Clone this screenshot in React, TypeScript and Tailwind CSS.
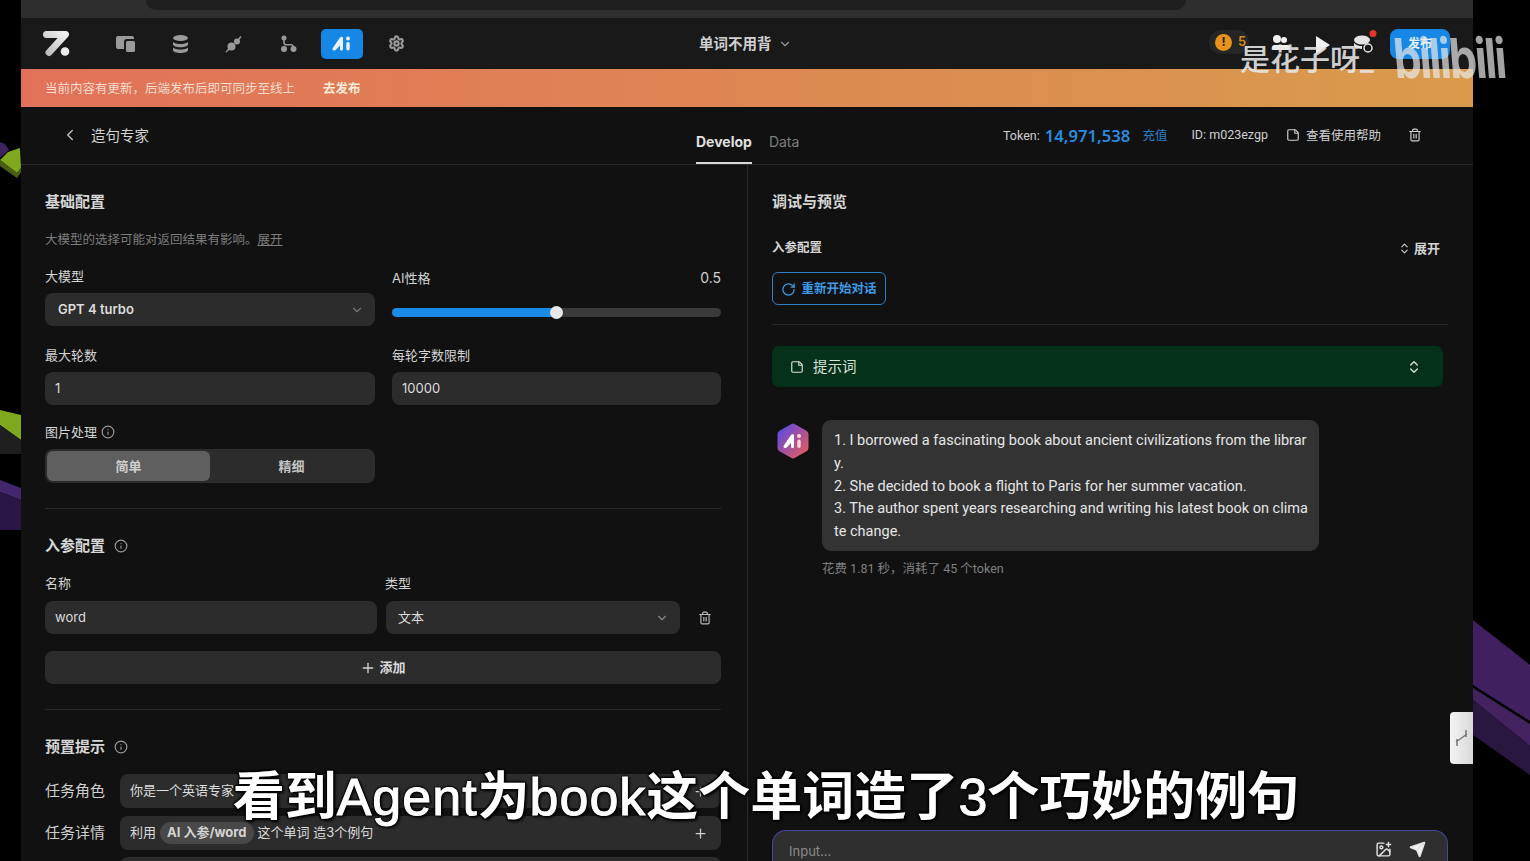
import React from 'react';
import { ChevronDown, ChevronLeft, ChevronsUpDown, Info, Plus, RotateCw, Settings, Trash2, StickyNote, Send, ImagePlus } from 'lucide-react';

const Logo: React.FC = () => (
  <svg width="28" height="27" viewBox="0 0 28 27">
    <defs>
      <linearGradient id="logoFill" x1="1" y1="0" x2="0" y2="1">
        <stop offset="0" stopColor="#f0f0f0" />
        <stop offset="1" stopColor="#bdbdbd" />
      </linearGradient>
    </defs>
    <path d="M3.500 4.500H22.500L6 22.500" fill="none" stroke="url(#logoFill)" strokeWidth="7" strokeLinecap="round" strokeLinejoin="round" />
    <circle cx="22" cy="21.500" r="4.300" fill="#ececec" />
  </svg>
);

const AiMark: React.FC<{ color: string }> = ({ color }) => (
  <svg width="20" height="15" viewBox="0 0 20 15" fill={color}>
    <path d="M8 1.500c.7-1 2.800-1 3 .5v11c0 1-.8 1.500-1.700 1.500S8 13.800 8 13v-3.500L4 13.800c-1 1-2 1-2.800.4s-1-1.500-.2-2.500z" />
    <circle cx="16" cy="2.500" r="2" />
    <rect x="14.300" y="6" width="3.400" height="8.500" rx="1.700" />
  </svg>
);

const NavIcons: React.FC = () => (
  <div className="flex items-center ml-[28px] text-[#9a9a9a]">
    <div className="w-[54px] flex justify-center">
      <svg width="20" height="16" viewBox="0 0 20 16" fill="currentColor"><path d="M2 0h14a2 2 0 0 1 2 2v1h-7a3 3 0 0 0-3 3v7H2a2 2 0 0 1-2-2V2a2 2 0 0 1 2-2z" /><rect x="10" y="5" width="9" height="11" rx="1.500" /></svg>
    </div>
    <div className="w-[54px] flex justify-center">
      <svg width="17" height="18" viewBox="0 0 17 18" fill="currentColor"><ellipse cx="8.500" cy="3" rx="7.500" ry="3" /><path d="M1 7c1.500 1.500 4.500 2 7.500 2s6-.5 7.500-2v2.500c0 1.500-3.500 2.700-7.500 2.700S1 11 1 9.500z" /><path d="M1 12.500c1.500 1.500 4.500 2 7.500 2s6-.5 7.500-2V15c0 1.700-3.500 3-7.500 3S1 16.700 1 15z" /></svg>
    </div>
    <div className="w-[54px] flex justify-center">
      <svg width="18" height="18" viewBox="0 0 18 18" fill="currentColor"><circle cx="6.500" cy="11.500" r="4" /><circle cx="12" cy="6.500" r="3" /><path d="M1 17l3-3M13.500 4.500L16 1.500" stroke="currentColor" strokeWidth="1.500" /></svg>
    </div>
    <div className="w-[54px] flex justify-center">
      <svg width="17" height="17" viewBox="0 0 17 17" fill="currentColor"><circle cx="4" cy="3" r="2.500" /><circle cx="4" cy="14" r="3" /><circle cx="13.500" cy="14" r="3" /><path d="M3.200 3h1.600v4.500c0 1 .5 1.500 1.500 1.500h5c1.500 0 2.500 1 2.500 2.500v1h-1.600v-1c0-.6-.4-.9-.9-.9h-5c-2 0-3.100-1.200-3.100-3.100z" /></svg>
    </div>
    <div className="w-[54px] flex justify-center">
      <div className="w-[42px] h-[30px] rounded-[5px] bg-[#1687e4] flex items-center justify-center">
        <AiMark color="#e8f2fb" />
      </div>
    </div>
    <div className="w-[54px] flex justify-center">
      <Settings size={17} strokeWidth={3} />
    </div>
  </div>
);

const Label: React.FC<{ children: React.ReactNode; className?: string }> = ({ children, className }) => (
  <div className={`text-[13px] leading-5 text-[#d4d4d4] ${className ?? ''}`}>{children}</div>
);

const Field: React.FC<{ children: React.ReactNode; className?: string }> = ({ children, className }) => (
  <div className={`h-[33px] rounded-[8px] bg-[#2c2c2d] flex items-center text-[13px] text-[#dcdcdc] ${className ?? ''}`}>{children}</div>
);

const Heading: React.FC<{ children: React.ReactNode; className?: string }> = ({ children, className }) => (
  <div className={`text-[15px] leading-5 font-bold text-[#d6d6d6] ${className ?? ''}`}>{children}</div>
);

const LeftPanel: React.FC = () => (
  <div className="w-[727px] shrink-0 border-r border-[#2a2a2a] pl-6 pr-[26px] pt-[27px]">
    <Heading>基础配置</Heading>
    <div className="mt-[18px] text-[12.5px] leading-5 text-[#7d7d7d]">
      大模型的选择可能对返回结果有影响。<span className="underline">展开</span>
    </div>

    <div className="mt-[16px] grid grid-cols-[330px_329px] gap-x-[17px]">
      <div>
        <Label>大模型</Label>
        <Field className="mt-[7px] justify-between pl-[13px] pr-[11px] font-semibold text-[12.5px]">
          <span>GPT 4 turbo</span>
          <ChevronDown size={14} className="text-[#777]" />
        </Field>
      </div>
      <div>
        <div className="flex justify-between pt-[2px]">
          <Label>AI性格</Label>
          <span className="text-sm leading-5 text-[#cfcfcf]">0.5</span>
        </div>
        <div className="relative mt-[20px] h-[9px] rounded-full bg-[#3a3a3b]">
          <div className="h-full w-1/2 rounded-full bg-[#1b8be8]" />
          <div className="absolute left-[158px] top-[-2px] w-[13px] h-[13px] rounded-full bg-[#e8e8e8]" />
        </div>
      </div>
      <div className="mt-[19px]">
        <Label>最大轮数</Label>
        <Field className="mt-[7px] pl-[10px]">1</Field>
      </div>
      <div className="mt-[19px]">
        <Label>每轮字数限制</Label>
        <Field className="mt-[7px] pl-[10px]">10000</Field>
      </div>
    </div>

    <Label className="mt-[17px] flex items-center gap-[4px]">
      图片处理 <Info size={14} className="text-[#9a9a9a]" />
    </Label>
    <div className="mt-[7px] w-[330px] h-[34px] rounded-[8px] bg-[#2c2c2d] p-[2px] grid grid-cols-2 text-[13px] font-semibold">
      <div className="rounded-[6px] bg-[#5f5f60] flex items-center justify-center pt-[2px] text-[#d0d0d0]">简单</div>
      <div className="flex items-center justify-center pt-[2px] text-[#c4c4c4]">精细</div>
    </div>

    <div className="mt-[25px] h-px bg-[#2a2a2a]" />

    <Heading className="mt-[27px] flex items-center gap-[9px]">
      入参配置 <Info size={14} className="text-[#9a9a9a] font-normal" />
    </Heading>
    <div className="mt-[17px] flex">
      <Label className="w-[340px]">名称</Label>
      <Label>类型</Label>
    </div>
    <div className="mt-[8px] flex items-center">
      <Field className="w-[332px] pl-[10px]">word</Field>
      <Field className="ml-[9px] w-[294px] justify-between pl-[12px] pr-[11px]">
        <span>文本</span>
        <ChevronDown size={14} className="text-[#888]" />
      </Field>
      <Trash2 size={14} className="ml-[18px] text-[#bdbdbd]" />
    </div>
    <Field className="mt-[17px] justify-center gap-[3px] font-semibold">
      <Plus size={16} className="text-[#cfcfcf]" /> 添加
    </Field>

    <div className="mt-[25px] h-px bg-[#2a2a2a]" />

    <Heading className="mt-[27px] flex items-center gap-[9px]">
      预置提示 <Info size={14} className="text-[#9a9a9a]" />
    </Heading>
    <div className="mt-[17px] flex items-center">
      <div className="w-[75px] text-[15px] text-[#cfcfcf]">任务角色</div>
      <Field className="flex-1 h-[34px] justify-between pl-[10px] pr-[13px] text-[12.5px]">
        <span>你是一个英语专家</span>
        <Plus size={15} className="text-[#cfcfcf]" />
      </Field>
    </div>
    <div className="mt-[8px] flex items-center">
      <div className="w-[75px] text-[15px] text-[#cfcfcf]">任务详情</div>
      <Field className="flex-1 h-[34px] justify-between pl-[10px] pr-[13px] text-[12.5px]">
        <span className="flex items-center gap-[4px]">
          利用
          <span className="rounded-full bg-[#484849] h-[22px] px-[7px] flex items-center font-bold text-[#d4d4d4]">AI 入参/word</span>
          这个单词 造3个例句
        </span>
        <Plus size={15} className="text-[#cfcfcf]" />
      </Field>
    </div>
    <div className="mt-[7px] ml-[75px] h-[34px] rounded-[8px] bg-[#2c2c2d]" />
  </div>
);

const RightPanel: React.FC = () => (
  <div className="flex-1 min-w-0 flex flex-col pl-6 pr-[25px] pt-[27px]">
    <Heading>调试与预览</Heading>
    <div className="mt-[26px] flex items-center justify-between pr-[8px]">
      <div className="text-[12.5px] leading-5 font-bold text-[#d4d4d4]">入参配置</div>
      <div className="flex items-center gap-[3px] text-[13px] leading-5 font-semibold text-[#d4d4d4]">
        <ChevronsUpDown size={13} /> 展开
      </div>
    </div>
    <div className="mt-[14px] w-[114px] h-[33px] rounded-[6px] border border-[#2f7fc4] flex items-center justify-center gap-[5px] pt-[1px] text-[12.5px] font-bold text-[#3f9be6]">
      <RotateCw size={15} /> 重新开始对话
    </div>
    <div className="mt-[19px] h-px bg-[#2a2a2a]" />
    <div className="mt-[21px] mr-[5px] h-[41px] rounded-[7px] bg-[#05301a] flex items-center justify-between pl-[18px] pr-[21px] text-[#d5e2da]">
      <span className="flex items-center gap-[9px] text-[14.5px]">
        <StickyNote size={14} /> 提示词
      </span>
      <ChevronsUpDown size={16} />
    </div>

    <div className="mt-[33px] flex">
      <svg width="32" height="36" viewBox="0 0 32 36" className="ml-[5px] mt-[3px] shrink-0">
        <defs>
          <linearGradient id="avatarFill" x1="0" y1="0" x2="1" y2="1">
            <stop offset="0" stopColor="#4d4bf0" />
            <stop offset="0.5" stopColor="#a3509f" />
            <stop offset="1" stopColor="#ee5f55" />
          </linearGradient>
        </defs>
        <path d="M14 1.200a4 4 0 0 1 4 0l11.500 6.600a4 4 0 0 1 2 3.500v13.400a4 4 0 0 1-2 3.500L18 34.800a4 4 0 0 1-4 0L2.500 28.200a4 4 0 0 1-2-3.500V11.300a4 4 0 0 1 2-3.500z" fill="url(#avatarFill)" />
        <g transform="translate(6 10.500)">
          <path d="M8 1.500c.7-1 2.800-1 3 .5v11c0 1-.8 1.500-1.700 1.500S8 13.800 8 13v-3.500L4 13.800c-1 1-2 1-2.800.4s-1-1.500-.2-2.500z" fill="#fff" />
          <circle cx="16" cy="2.500" r="2" fill="#fbd6d0" />
          <rect x="14.300" y="6" width="3.400" height="8.500" rx="1.700" fill="#fbd6d0" />
        </g>
      </svg>
      <div className="ml-[13px]">
        <div className="w-[497px] h-[131px] rounded-[9px] bg-[#333334] pl-[12px] pr-[12px] pt-[10px] font-['Roboto','Noto_Sans_CJK_SC',sans-serif] text-[14.5px] leading-[22.8px] text-[#e6e6e6] whitespace-nowrap">
          1. I borrowed a fascinating book about ancient civilizations from the librar<br />
          y.<br />
          2. She decided to book a flight to Paris for her summer vacation.<br />
          3. The author spent years researching and writing his latest book on clima<br />
          te change.
        </div>
        <div className="mt-[9px] font-['Roboto','Noto_Sans_CJK_SC',sans-serif] text-[12.5px] leading-[18px] text-[#7f7f7f]">花费 1.81 秒，消耗了 45 个token</div>
      </div>
    </div>

    <div className="mt-auto -mb-[10px] h-[41px] rounded-t-[14px] border border-b-0 border-[#3f4a9a] bg-[#2f2f30] flex items-start justify-between pt-[10px] pl-[16px] pr-[21px]">
      <span className="text-[13px] leading-5 text-[#8a8a8a]">Input...</span>
      <span className="flex items-center gap-[17px] text-[#e4e4e4]">
        <ImagePlus size={17} />
        <Send size={17} fill="#f2f2f2" />
      </span>
    </div>
  </div>
);

const LeftEdge: React.FC = () => (
  <svg width="21" height="861" viewBox="0 0 21 861" className="shrink-0">
    <path d="M0 142L5 144L9 150L0 158z" fill="#3b2360" />
    <path d="M8 152L20 148L21 168L17 173L0 160z" fill="#7fa81f" />
    <path d="M0 160L17 173L21 168V172L17 178L0 166z" fill="#4a5f14" />
    <path d="M0 410L21 415V440L0 425z" fill="#7fa81f" />
    <path d="M0 425L21 440V454H0z" fill="#1f1f1f" />
    <path d="M0 480L21 488V500L0 492z" fill="#43266e" />
    <path d="M0 492L21 500V530H0z" fill="#2a1745" />
  </svg>
);

const RightEdge: React.FC = () => (
  <svg width="57" height="861" viewBox="0 0 57 861" className="shrink-0">
    <path d="M0 620L57 665V721L0 685z" fill="#40205f" />
    <path d="M0 688L57 724V746L0 700z" fill="#43225f" />
    <path d="M0 700L57 746V775L0 735z" fill="#2a1740" />
  </svg>
);

const App: React.FC = () => (
  <div className="relative w-[1530px] h-[861px] overflow-hidden bg-black flex font-['Inter','Noto_Sans_CJK_SC',sans-serif]">
    <LeftEdge />
    <div className="w-[1452px] shrink-0 flex flex-col bg-[#111112]">
      {/* browser chrome strip */}
      <div className="h-[18px] bg-[#2e2e2f] shrink-0 flex pl-[125px]">
        <div className="w-[1040px] h-[10px] rounded-b-[10px] bg-[#1f1f20]" />
      </div>

      {/* top nav */}
      <div className="relative h-[51px] shrink-0 bg-[#19191a] flex items-center pl-[22px]">
        <Logo />
        <NavIcons />
        <div className="absolute left-[678px] top-0 h-full flex items-center gap-[6px] text-[14.5px] font-semibold text-[#cfcfcf]">
          单词不用背 <ChevronDown size={14} className="text-[#999]" />
        </div>
        <div className="absolute left-[1188px] top-[12px] h-[24px] w-[40px] rounded-full bg-[#262627] flex items-center pl-[6px] gap-[6px]">
          <span className="w-[17px] h-[17px] rounded-full bg-[#e8921a] text-[12px] font-bold text-[#222] flex items-center justify-center">!</span>
          <span className="text-[13px] font-semibold text-[#d98a1f]">5</span>
        </div>
        <div className="absolute left-[1369px] top-[11px] w-[60px] h-[30px] rounded-[8px] bg-[#1687e4] pl-[18px] flex items-center text-[12px] font-semibold text-[#e8f2fb]">发布</div>
      </div>

      {/* update banner */}
      <div className="h-[38px] shrink-0 bg-gradient-to-r from-[#e27159] to-[#d89b4b] flex items-center pl-6 pt-[2px] text-[12.5px] text-[#f3dcd0]">
        当前内容有更新，后端发布后即可同步至线上
        <span className="ml-[28px] font-bold text-[#f8ead9]">去发布</span>
      </div>

      {/* page header */}
      <div className="relative h-[58px] shrink-0 border-b border-[#2a2a2a] bg-[#111112] flex items-center">
        <ChevronLeft size={18} className="ml-[40px] -mt-[1px] text-[#bcbcbc]" />
        <span className="ml-[12px] text-[14.5px] text-[#d4d4d4]">造句专家</span>
        <div className="absolute left-[675px] bottom-0 h-full flex items-end gap-[17px] text-sm">
          <div className="border-b-2 border-[#d8d8d8] h-[42px] pt-[10px] font-bold text-[#e0e0e0]">Develop</div>
          <div className="h-[42px] pt-[10px] text-[#7d7d7d]">Data</div>
        </div>
        <div className="ml-auto mr-[51px] flex items-center font-['Roboto','Noto_Sans_CJK_SC',sans-serif] text-[12.5px] text-[#cfcfcf]">
          <span className="pt-[2px]">Token:</span>
          <span className="ml-[5px] font-['Noto_Sans',sans-serif] text-[16.7px] font-semibold text-[#2b8ade]">14,971,538</span>
          <span className="ml-[12px] pt-[2px] text-[#2b7fc8]">充值</span>
          <span className="ml-[24px]">ID: m023ezgp</span>
          <span className="ml-[18px] flex items-center gap-[6px]"><StickyNote size={14} /><span className="pt-[2px]">查看使用帮助</span></span>
          <Trash2 size={14} className="ml-[27px]" />
        </div>
      </div>

      <div className="flex-1 min-h-0 flex overflow-hidden">
        <LeftPanel />
        <RightPanel />
      </div>
    </div>
    <RightEdge />

    {/* video overlays */}
    <div className="absolute left-[1450px] top-[712px] w-[23px] h-[52px] rounded-l-[4px] bg-gradient-to-r from-[#f4f4f4] to-[#d8d8d8] flex items-center justify-center">
      <svg width="13" height="18" viewBox="0 0 13 18" fill="none" stroke="#777" strokeWidth="1.500"><path d="M1 13l11-8M11 1v7M2 10v7" /></svg>
    </div>
    <svg width="112" height="26" viewBox="0 0 112 26" className="absolute left-[1270px] top-[30px]">
      <circle cx="7" cy="9" r="4" fill="#f0f0f0" />
      <circle cx="14" cy="10" r="3" fill="#f0f0f0" />
      <rect x="2" y="15" width="18" height="5" rx="2.500" fill="#f0f0f0" />
      <path d="M46 6L60 15L46 24z" fill="#f0f0f0" />
      <ellipse cx="92" cy="10" rx="8" ry="4.500" fill="#e4e4e4" />
      <path d="M84 13c2 2.500 6 3 8 3v3c-3 0-6-1-8-3z" fill="#e4e4e4" />
      <circle cx="98" cy="18" r="4" fill="none" stroke="#e4e4e4" strokeWidth="1.500" />
      <circle cx="103" cy="3.500" r="3.500" fill="#e2352c" />
    </svg>
    <div className="absolute left-[1240px] top-[41px] text-[30px] leading-[36px] font-medium text-[#e8e8e8]/90">是花子呀_</div>
    <div className="absolute left-[1391px] top-[28px] origin-top-left scale-y-[1.25] skew-x-[6deg] text-[44px] leading-[48px] font-bold tracking-[-2px] text-[#e8e8e8]/70 font-['Inter',sans-serif]">bilibili</div>
    <div className="absolute left-0 right-[-2px] top-[762px] text-center font-['Liberation_Sans','Noto_Sans_CJK_SC',sans-serif] text-[52px] leading-[70px] font-bold text-white [text-shadow:2px_2px_3px_#000,-1px_-1px_2px_#000,1px_-1px_2px_#000,-1px_1px_2px_#000]">
      看到<span className="font-normal tracking-[1px] [-webkit-text-stroke:1px_#fff]">Agent</span>为<span className="font-normal tracking-[1px] [-webkit-text-stroke:1px_#fff]">book</span>这个单词造了<span className="font-normal [-webkit-text-stroke:1px_#fff]">3</span>个巧妙的例句
    </div>
  </div>
);

export default App;
